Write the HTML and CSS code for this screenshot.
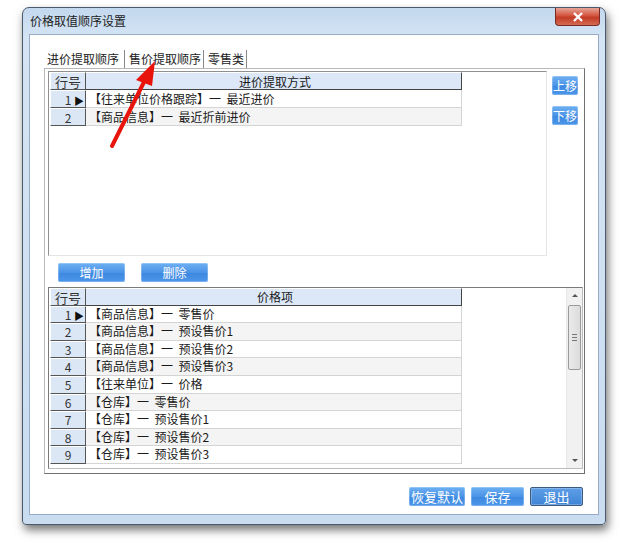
FILE: index.html
```html
<!DOCTYPE html>
<html lang="zh-CN">
<head>
    <meta charset="UTF-8">
    <title>价格取值顺序设置</title>
    <link rel="stylesheet" href="styles.css">
</head>
<body>
    <div class="window">
        <div class="titlebar">
            <span class="title">价格取值顺序设置</span>
            <div class="close-btn">
                <svg width="12" height="10" viewBox="0 0 12 10"><path d="M2 1 L10 9 M10 1 L2 9" stroke="#fff" stroke-width="2.4"/></svg>
            </div>
        </div>
        <div class="client">
            <div class="tabs">
                <div class="tab active">进价提取顺序</div>
                <div class="tab">售价提取顺序</div>
                <div class="tab">零售类</div>
            </div>
            <div class="panel">
                <div class="upper">
                    <div class="grid grid-top">
                        <div class="row head">
                            <div class="num">行号</div>
                            <div class="cell">进价提取方式</div>
                        </div>
                        <div class="row">
                            <div class="num cur">1 <span class="mark">▶</span></div>
                            <div class="cell">【往来单位价格跟踪】一&nbsp; 最近进价</div>
                        </div>
                        <div class="row alt">
                            <div class="num">2</div>
                            <div class="cell">【商品信息】一&nbsp; 最近折前进价</div>
                        </div>
                    </div>
                    <div class="side-btns">
                        <div class="btn small">上移</div>
                        <div class="btn small">下移</div>
                    </div>
                </div>
                <div class="mid-btns">
                    <div class="btn wide">增加</div>
                    <div class="btn wide">删除</div>
                </div>
                <div class="grid grid-bottom">
                    <div class="rows">
                        <div class="row head">
                            <div class="num">行号</div>
                            <div class="cell">价格项</div>
                        </div>
                        <div class="row">
                            <div class="num cur">1 <span class="mark">▶</span></div>
                            <div class="cell">【商品信息】一&nbsp; 零售价</div>
                        </div>
                        <div class="row alt">
                            <div class="num">2</div>
                            <div class="cell">【商品信息】一&nbsp; 预设售价1</div>
                        </div>
                        <div class="row">
                            <div class="num">3</div>
                            <div class="cell">【商品信息】一&nbsp; 预设售价2</div>
                        </div>
                        <div class="row alt">
                            <div class="num">4</div>
                            <div class="cell">【商品信息】一&nbsp; 预设售价3</div>
                        </div>
                        <div class="row">
                            <div class="num">5</div>
                            <div class="cell">【往来单位】一&nbsp; 价格</div>
                        </div>
                        <div class="row alt">
                            <div class="num">6</div>
                            <div class="cell">【仓库】一&nbsp; 零售价</div>
                        </div>
                        <div class="row">
                            <div class="num">7</div>
                            <div class="cell">【仓库】一&nbsp; 预设售价1</div>
                        </div>
                        <div class="row alt">
                            <div class="num">8</div>
                            <div class="cell">【仓库】一&nbsp; 预设售价2</div>
                        </div>
                        <div class="row">
                            <div class="num">9</div>
                            <div class="cell">【仓库】一&nbsp; 预设售价3</div>
                        </div>
                    </div>
                    <div class="scrollbar">
                        <div class="arrow up"></div>
                        <div class="thumb"><span class="grip"></span></div>
                        <div class="track"></div>
                        <div class="arrow down"></div>
                    </div>
                </div>
            </div>
            <div class="footer">
                <div class="btn foot restore">恢复默认</div>
                <div class="btn foot">保存</div>
                <div class="btn foot exit">退出</div>
            </div>
        </div>
    </div>
    <svg class="pointer" width="60" height="96" viewBox="0 0 60 96">
        <path d="M6 88 L40 20" stroke="#e8140c" stroke-width="4" stroke-linecap="round"/>
        <path d="M49 3 L30 22 L46 28 Z" fill="#e8140c"/>
    </svg>
</body>
</html>
```

FILE: styles.css
```css
body {
    margin: 0;
    width: 640px;
    height: 555px;
    background: #fff;
    font-family: "Noto Sans CJK SC", "Liberation Sans", sans-serif;
    font-size: 12px;
    color: #1a1a1a;
    position: relative;
    overflow: hidden;
}
.window {
    margin: 7px 0 0 22px;
    width: 582px;
    height: 516px;
    border: 1px solid #4a5a6c;
    border-radius: 7px 7px 4px 4px;
    background: linear-gradient(to bottom, #c3d8ee 0, #d4e4f4 30px, #c9dcf0 100%);
    box-shadow: 2px 5px 10px rgba(0, 0, 0, 0.55);
}
.titlebar {
    height: 26px;
    display: flex;
    justify-content: space-between;
    align-items: flex-start;
    padding-left: 7px;
}
.title {
    margin-top: 4px;
    color: #222;
}
.close-btn {
    width: 43px;
    height: 17px;
    margin-right: 5px;
    border: 1px solid #7a2a24;
    border-top: none;
    border-radius: 0 0 4px 4px;
    background: linear-gradient(to bottom, #e7a497 0, #d4553f 45%, #c23b25 55%, #d46a52 100%);
    display: flex;
    justify-content: center;
    align-items: center;
}
.client {
    margin: 0 6px;
    height: 479px;
    background: #fff;
    border: 1px solid #97acc4;
    position: relative;
}
.tabs {
    display: flex;
    padding: 15px 0 0 15px;
    height: 18px;
}
.tab {
    padding: 0 2px 0 4px;
    line-height: 18px;
    border-right: 1px solid #888;
    box-shadow: 1px 0 0 #fff;
    color: #222;
}
.tab.active {
    padding: 0 5px 0 2px;
}
.panel {
    margin-left: 14px;
    width: 541px;
    height: 406px;
    border: 1px solid #b8b8b8;
    border-right-color: #707070;
    border-bottom-color: #707070;
    box-shadow: inset 1px 1px 0 #fff;
    padding: 2px 0 0 3px;
    box-sizing: border-box;
}
.upper {
    display: flex;
}
.grid {
    background: #fff;
    border: 1px solid #909090;
    border-right-color: #e4e4e4;
    border-bottom-color: #e4e4e4;
}
.grid-top {
    width: 497px;
    height: 183px;
}
.row {
    display: flex;
    height: 18px;
    line-height: 17px;
    width: 412px;
    margin-left: 1px;
}
.row .num {
    width: 36px;
    text-align: center;
    background: #dce7f6;
    border-top: 1px solid #fff;
    border-left: 1px solid #fff;
    border-right: 1px solid #555;
    border-bottom: 1px solid #555;
    box-sizing: border-box;
    color: #333;
}
.row .num.cur {
    text-align: right;
    padding-right: 1px;
}
.mark {
    font-size: 10px;
    color: #111;
}
.row .cell {
    flex: 1;
    padding-left: 3px;
    border-bottom: 1px solid #d4d4d4;
    border-right: 1px solid #d4d4d4;
    box-sizing: border-box;
    white-space: nowrap;
}
.row.alt .cell {
    background: #f4f4f4;
}
.row.head .num {
    font-size: 13px;
    line-height: 17px;
}
.row.head .cell {
    text-align: center;
    background: #dce8f8;
    border-right: 1px solid #444;
    border-bottom: 1px solid #444;
    border-top: 1px solid #fff;
}
.side-btns {
    display: flex;
    flex-direction: column;
    gap: 11px;
    margin: 5px 0 0 5px;
}
.btn {
    background: linear-gradient(to bottom, #6eb0f2 0, #4a93e6 50%, #3d88e0 51%, #4c97ea 100%);
    color: #fff;
    text-align: center;
    border-radius: 2px;
    box-shadow: inset 0 0 0 1px rgba(255, 255, 255, 0.25);
}
.btn.small {
    width: 26px;
    height: 19px;
    line-height: 19px;
}
.mid-btns {
    display: flex;
    gap: 16px;
    margin: 7px 0 5px 10px;
}
.btn.wide {
    width: 67px;
    height: 19px;
    line-height: 19px;
}
.grid-bottom {
    width: 533px;
    height: 180px;
    display: flex;
    justify-content: space-between;
    border-color: #7a7a7a;
    border-right-color: #bcbcbc;
    border-bottom-color: #bcbcbc;
}
.grid-bottom .row {
    height: 17.6px;
    line-height: 16.6px;
}
.scrollbar {
    width: 15px;
    display: flex;
    flex-direction: column;
    background: #f1f1f1;
    border-left: 1px solid #e8e8e8;
}
.arrow {
    height: 17px;
    position: relative;
}
.arrow::after {
    content: "";
    position: absolute;
    left: 5px;
    border-left: 3px solid transparent;
    border-right: 3px solid transparent;
}
.arrow.up::after {
    top: 6px;
    border-bottom: 3px solid #555;
}
.arrow.down::after {
    bottom: 6px;
    border-top: 3px solid #555;
}
.thumb {
    height: 63px;
    margin: 0 1px;
    border: 1px solid #9a9a9a;
    border-radius: 2px;
    background: linear-gradient(to right, #eaeaea, #dcdcdc);
    display: flex;
    justify-content: center;
    align-items: center;
}
.grip {
    width: 5px;
    height: 5px;
    border-top: 1px solid #777;
    border-bottom: 1px solid #777;
    background: linear-gradient(#777, #777) center / 100% 1px no-repeat;
}
.track {
    flex: 1;
}
.footer {
    display: flex;
    justify-content: flex-end;
    gap: 6px;
    margin: 13px 15px 0 0;
}
.btn.foot {
    width: 53px;
    height: 19px;
    line-height: 19px;
    font-size: 13px;
}
.btn.restore {
    width: 56px;
}
.btn.exit {
    border: 1px solid #3d5a80;
    width: 51px;
    height: 17px;
    line-height: 17px;
    background: linear-gradient(to bottom, #5f9ee6, #3e84d6);
}
.pointer {
    position: absolute;
    left: 106px;
    top: 58px;
}
```
